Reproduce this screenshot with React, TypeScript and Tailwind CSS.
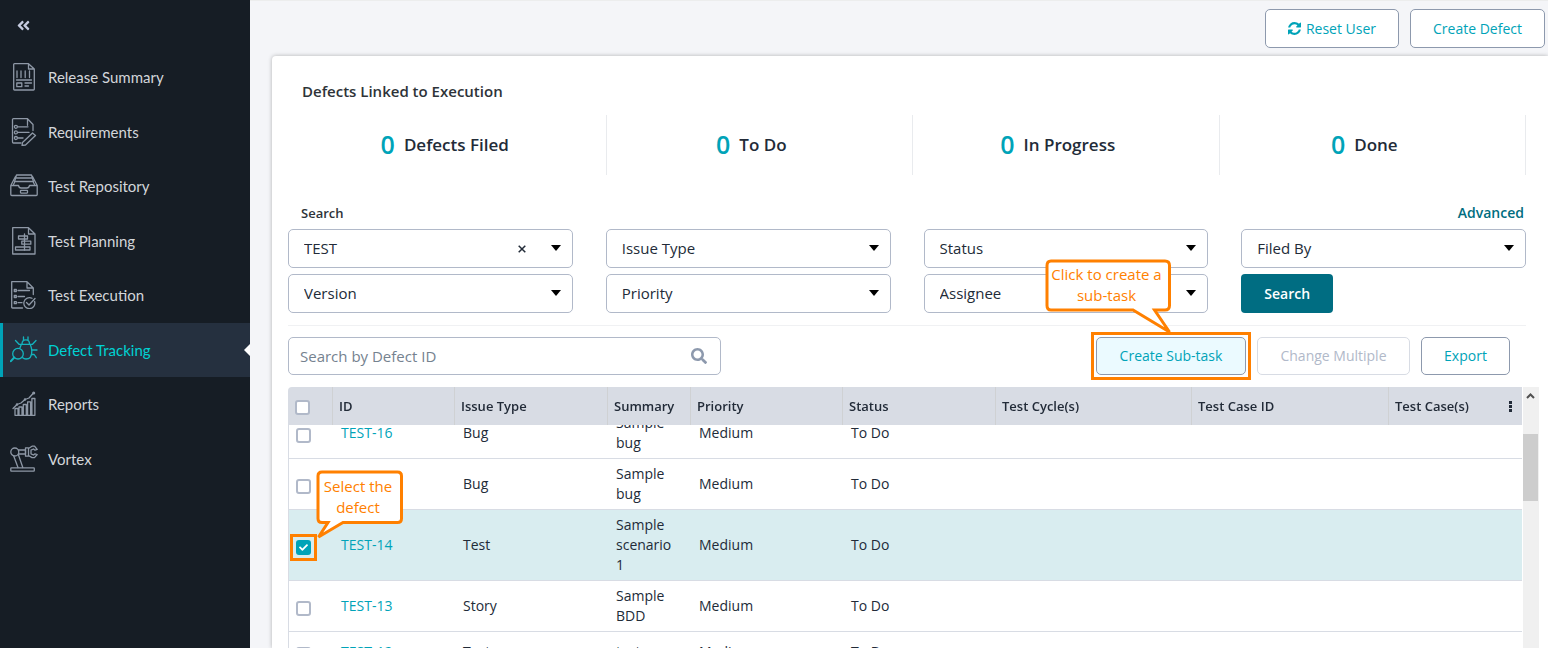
import { useEffect, useRef, useState } from "react";
import type { ReactNode } from "react";
import { FaSearch, FaAngleDoubleLeft, FaCheck } from "react-icons/fa";

function NavIcon({ children }: { children: ReactNode }) {
  return (
    <svg
      viewBox="0 0 28 28"
      className="size-7 shrink-0"
      fill="none"
      stroke="currentColor"
      strokeWidth="1.3"
      strokeLinejoin="round"
      strokeLinecap="round"
      aria-hidden="true"
    >
      {children}
    </svg>
  );
}

const navItems: { label: string; active?: boolean; icon: ReactNode }[] = [
  {
    label: "Release Summary",
    icon: (
      <>
        <path d="M4.5.7H18.5L24.3 6V26.3Q24.3 27 23.5 27H4.5Q3.7 27 3.7 26.3V1.5Q3.7.7 4.5.7ZM18.5.7V6H24.3" />
        <path d="M7 8v6.500M11 8v6.500M15.200 8v6.500M19.500 8v6.500M6.500 17H21.500M15 20H21.500M15 23H18.500" />
        <rect x="6.800" y="20" width="5" height="3.700" />
      </>
    ),
  },
  {
    label: "Requirements",
    icon: (
      <>
        <path d="M11 25H3.500Q2.500 25 2.500 24V1.500Q2.500.7 3.500.7H17.500L23 6.500V12.500M17.500.7V7.300" />
        <path d="M8 8.800H18M8 14.400H19M8 20H13" />
        <circle cx="5.900" cy="8.800" r="1.500" />
        <circle cx="5.900" cy="14.400" r="1.500" />
        <circle cx="5.900" cy="20" r="1.500" />
        <path d="M22.500 15L25.500 17.500L15.500 27L12 27.500L12.500 24.500Z" />
      </>
    ),
  },
  {
    label: "Test Repository",
    icon: (
      <>
        <path d="M.8 13.500V22.500Q.8 23.500 1.800 23.500H26.200Q27.200 23.500 27.200 22.500V13.500M.8 13.500H8.500Q9 16 11 16H17Q19 16 19.500 13.500H27.200M.8 13.500L5.500 4.500M27.200 13.500L22.500 4.500" />
        <path d="M6.500 3H21.500L22.500 6H5.500ZM4.500 9.500L5.500 6.500M23.500 9.500L22.500 6.500M5 9.500H23L24.500 12.500M5 9.500L3.500 12.500" />
        <rect x="10.500" y="18.300" width="7" height="2.800" rx=".5" />
      </>
    ),
  },
  {
    label: "Test Planning",
    icon: (
      <>
        <path d="M2.700.7H18.500L25 7V27H2.700ZM18.500.7V7H25" />
        <rect x="8.500" y="9" width="9" height="3" />
        <rect x="11.800" y="14.200" width="9" height="3" />
        <rect x="5.500" y="20" width="14.500" height="3" />
        <path d="M14.500 7V23" />
      </>
    ),
  },
  {
    label: "Test Execution",
    icon: (
      <>
        <path d="M12.500 27H2.500Q1.700 27 1.700 26.200V.7H17L23.300 7V13.500M17 .7V7H23.300" />
        <path d="M8 9.500H19.500M8 15.500H14.500M8 21.700H12" />
        <rect x="4.300" y="8.500" width="2" height="2" />
        <rect x="4.300" y="14.500" width="2" height="2" />
        <rect x="4.300" y="20.700" width="2" height="2" />
        <path d="M24.600 20.500A5.500 5.500 0 1 1 22 17.300M16.500 21.500L19 24L25 17.500" />
      </>
    ),
  },
  {
    label: "Defect Tracking",
    active: true,
    icon: (
      <>
        <circle cx="8" cy="17.700" r="5.300" />
        <path d="M4.200 21.500L.9 25.200" strokeWidth="2" />
        <path d="M12 8.200Q12 3.800 15.800 3.800T19.500 8.200M13.500 4.500V1M18 4.500V1M5.500 4.500L9 8.300H22.500L26 4.500" />
        <path d="M11.300 8.500L9.800 12.300M20.300 8.500Q21.800 12 21.800 15.500Q21.800 23 16 23Q14 23 12.700 21.700M21.800 14H27M21.300 18.500H24.200L26.300 21.700" />
      </>
    ),
  },
  {
    label: "Reports",
    icon: (
      <>
        <path d="M5 25.300V18.500H8V25.300M9 25.300V17H12V25.300M13.300 25.300V14.500H16.300V25.300M17.600 25.300V11.800H20.600V25.300M21.900 25.300V8.500H24.900V25.300M5 25.300H24.900" />
        <path d="M3 18.500L7 14.500L11 13L15 9.500L19 8L23.500 3" />
        <circle cx="23.700" cy="3" r=".9" />
        <circle cx="7" cy="14.500" r=".6" />
        <circle cx="15" cy="9.500" r=".6" />
      </>
    ),
  },
  {
    label: "Vortex",
    icon: (
      <>
        <circle cx="4.800" cy="7" r="4" />
        <path d="M8.500 5H15.500V9H8.500M3.700 11L8 22.500M8.500 10L12.800 22.500" />
        <rect x=".8" y="22.800" width="23.500" height="3.400" rx=".6" />
        <path d="M15.500 2.800H18.500V11.200H15.500ZM18.500 3.500L22 1.200H24.500L27.200 4.500L25 5.200L23.500 4L21 5.200V8.800L23.500 10L25 8.800L27.200 9.500L24.500 12.600H22L18.500 10.500" />
      </>
    ),
  },
];

const stats = ["Defects Filed", "To Do", "In Progress", "Done"];

const columns = [
  { label: "ID", width: "w-[122px]" },
  { label: "Issue Type", width: "w-[153px]" },
  { label: "Summary", width: "w-[83px]" },
  { label: "Priority", width: "w-[152px]" },
  { label: "Status", width: "w-[153px]" },
  { label: "Test Cycle(s)", width: "w-[196px]" },
  { label: "Test Case ID", width: "w-[197px]" },
  { label: "Test Case(s)", width: "w-[134px]" },
];

const defects = [
  { id: "TEST-16", type: "Bug", summary: "Sample bug" },
  { id: "TEST-15", type: "Bug", summary: "Sample bug" },
  { id: "TEST-14", type: "Test", summary: "Sample scenario 1" },
  { id: "TEST-13", type: "Story", summary: "Sample BDD" },
  { id: "TEST-12", type: "Test", summary: "test" },
];

function FilterSelect({ label, value }: { label: string; value?: string }) {
  const [current, setCurrent] = useState(value ?? "");
  return (
    <div className="relative">
      <select
        aria-label={label}
        value={current}
        onChange={(e) => setCurrent(e.target.value)}
        className="block h-[39px] w-full appearance-none rounded-[5px] border border-[#b1b9c9] bg-white pl-[15px] pr-10 text-[15px] text-[#222b38]"
      >
        <option value="">{label}</option>
        {value && <option value={value}>{value}</option>}
      </select>
      {current && (
        <button
          type="button"
          aria-label="Clear"
          onClick={() => setCurrent("")}
          className="absolute right-[43px] top-3 flex size-4 items-center justify-center"
        >
          <svg viewBox="0 0 8 8" className="size-2" stroke="#222b38" strokeWidth="1.500" aria-hidden="true">
            <path d="M.7.7L7.300 7.300M7.300.7L.7 7.300" />
          </svg>
        </button>
      )}
      <svg viewBox="0 0 10 6" className="pointer-events-none absolute right-3 top-4 h-1.5 w-2.5" aria-hidden="true">
        <path d="M0 0H10L5 6Z" fill="#000" />
      </svg>
    </div>
  );
}

function Check({ label, checked = false }: { label: string; checked?: boolean }) {
  const [on, setOn] = useState(checked);
  return (
    <span className="relative block size-[15px]">
      <input
        type="checkbox"
        aria-label={label}
        checked={on}
        onChange={() => setOn(!on)}
        className="block size-[15px] appearance-none rounded-[3px] border-2 border-[#b1b9c9] bg-white checked:border-[#00a3b8] checked:bg-[#00a3b8]"
      />
      {on && <FaCheck className="pointer-events-none absolute left-[3px] top-[3px] size-[9px] text-white" />}
    </span>
  );
}

const outlineButton =
  "rounded-[5px] border border-[#8d99ad] bg-white text-[14px] text-[#00a3b8]";

export default function App() {
  const scroller = useRef<HTMLDivElement>(null);

  useEffect(() => {
    if (scroller.current) scroller.current.scrollTop = 17;
  }, []);

  return (
    <div className="flex h-screen overflow-hidden bg-[#f4f5f8] font-['Open_Sans','Noto_Sans',sans-serif] text-[#222b38]">
      <aside className="w-[250px] shrink-0 bg-[#161d25] font-['Lato',sans-serif] text-[15px] text-[#d3d6da]">
        <button type="button" aria-label="Collapse menu" className="flex h-[50px] items-center pl-4 text-[#c5cbe0]">
          <FaAngleDoubleLeft className="size-[15px]" />
        </button>
        <nav className="grid h-[436px] auto-rows-fr">
          {navItems.map((item) => (
            <a
              key={item.label}
              href="#"
              className={
                item.active
                  ? "relative flex items-center gap-2.5 border-l-[3px] border-[#00a3b8] bg-[#25303f] pl-[7px] text-[#00d2d3]"
                  : "flex items-center gap-2.5 pl-2.5"
              }
            >
              <span className={item.active ? "text-[#14b3bd]" : "text-[#8e98a6]"}>
                <NavIcon>{item.icon}</NavIcon>
              </span>
              {item.label}
              {item.active && (
                <svg viewBox="0 0 6 12" className="absolute right-0 h-3 w-1.5" aria-hidden="true">
                  <path d="M6 0V12L0 6Z" fill="#fff" />
                </svg>
              )}
            </a>
          ))}
        </nav>
      </aside>

      <main className="flex min-w-0 flex-1 flex-col border-t border-[#eceded] pl-[22px]">
        <div className="flex justify-end gap-[11px] pb-2 pr-[3px] pt-2">
          <button type="button" className={`${outlineButton} flex h-[39px] w-[134px] items-center justify-center gap-[5px]`}>
            <svg viewBox="0 0 1536 1536" className="size-[13px]" fill="currentColor" aria-hidden="true">
              <path d="M1511 928q0 5-1 7-64 268-268 434.500T764 1536q-146 0-282.500-55T238 1324l-129 129q-19 19-45 19t-45-19-19-45V960q0-26 19-45t45-19h448q26 0 45 19t19 45-19 45l-137 137q71 66 161 102t187 36q134 0 250-65t186-179q11-17 53-117 8-23 30-23h192q13 0 22.500 9.500t9.500 22.500zm25-800v448q0 26-19 45t-45 19h-448q-26 0-45-19t-19-45 19-45l138-138Q969 256 768 256q-134 0-250 65T332 500q-11 17-53 117-8 23-30 23H50q-13 0-22.500-9.500T18 608v-7q65-268 270-434.500T768 0q146 0 284 55.500T1297 212l130-129q19-19 45-19t45 19 19 45z" />
            </svg>
            Reset User
          </button>
          <button type="button" className={`${outlineButton} h-[39px] w-[135px]`}>
            Create Defect
          </button>
        </div>

        <section className="flex min-h-0 flex-1 flex-col rounded-tl-[4px] bg-white pl-4 pr-[22px] shadow-[0_0_4px_rgba(0,0,0,0.28)]">
          <h1 className="pl-3.5 pt-[25px] text-[15px] font-semibold leading-5 text-[#2e3338]">
            Defects Linked to Execution
          </h1>

          <div className="ml-3 mt-3.5 grid grid-cols-4">
            {stats.map((label) => (
              <div key={label} className="flex h-[60px] items-center justify-center gap-[9px] border-r border-[#e9ebee] pr-4">
                <span className="pb-0.5 text-[25px] font-semibold leading-none text-[#00a3b8]">0</span>
                <span className="text-[17px] font-semibold">{label}</span>
              </div>
            ))}
          </div>

          <div className="mt-7 flex items-center justify-between pl-[13px] pr-0.5 leading-5">
            <h2 className="text-[13px] font-semibold text-[#2e3338]">Search</h2>
            <a href="#" className="text-[14px] font-semibold text-[#006d80]">Advanced</a>
          </div>

          <div className="mt-1.5 grid grid-cols-4 gap-x-[33px] gap-y-1.5">
            <FilterSelect label="Project" value="TEST" />
            <FilterSelect label="Issue Type" />
            <FilterSelect label="Status" />
            <FilterSelect label="Filed By" />
            <FilterSelect label="Version" />
            <FilterSelect label="Priority" />
            <FilterSelect label="Assignee" />
            <button type="button" className="h-[39px] w-[92px] rounded-[4px] bg-[#006d82] text-[14px] font-semibold text-white">
              Search
            </button>
          </div>

          <div className="mt-3 flex items-center border-t border-[#f0f1f3] pr-4 pt-[11px]">
            <div className="relative w-[433px]">
              <input
                type="text"
                aria-label="Search by Defect ID"
                placeholder="Search by Defect ID"
                className="block h-[38px] w-full rounded-[5px] border border-[#b1b9c9] pl-[11px] pr-10 text-[15px] placeholder:text-[#75828f]"
              />
              <FaSearch className="pointer-events-none absolute right-3.5 top-[11px] size-4 text-[#8d99ad]" />
            </div>
            <div className="ml-auto flex gap-[11px]">
              <div className="relative">
                <button type="button" className="h-[38px] w-[150px] rounded-[5px] border border-[#8d99ad] bg-[#ebfaff] pb-px text-[14px] text-[#00a3b8]">
                  Create Sub-task
                </button>
                <div className="pointer-events-none absolute -inset-[5px] border-[3px] border-[#ff8000]" />
                <div className="pointer-events-none absolute left-[-51px] top-[-78px] z-30 h-[75px] w-[127px]">
                  <svg viewBox="0 0 127 75" className="absolute inset-0" aria-hidden="true">
                    <path
                      d="M6 2H120Q124.500 2 124.500 6.500V46.500Q124.500 51 120 51H109.500L124.500 73L88 51H6Q2 51 2 46.500V6.500Q2 2 6 2Z"
                      fill="#fff"
                      stroke="#ff8000"
                      strokeWidth="3"
                    />
                  </svg>
                  <p className="relative pr-1 pt-[5px] text-center text-[15px] leading-[21px] text-[#ff8000]">
                    Click to create a<br />sub-task
                  </p>
                </div>
              </div>
              <button type="button" disabled className="h-[38px] w-[153px] rounded-[5px] border border-[#d8dce4] bg-white pb-px text-[14px] text-[#b1b9c9]">
                Change Multiple
              </button>
              <button type="button" className={`${outlineButton} h-[38px] w-[89px] pb-px`}>
                Export
              </button>
            </div>
          </div>

          <div className="-mr-[13px] mt-3 flex min-h-0 flex-1 gap-px">
            <div ref={scroller} className="min-w-0 flex-1 overflow-y-auto [scrollbar-width:none]">
              <table className="w-full table-fixed border-separate border-spacing-0 text-left text-[14px] leading-5">
                <thead className="sticky top-0 z-20">
                  <tr className="h-[38px] bg-[#d8dce4]">
                    <th className="w-[44px] rounded-tl-[4px] pl-[7px] pt-0.5">
                      <Check label="Select all defects" />
                    </th>
                    {columns.map((col, i) => (
                      <th key={col.label} className={`${col.width} border-l border-[#cfd1d3] pl-1.5 text-[13px] font-semibold`}>
                        <div className="flex items-center justify-between">
                          {col.label}
                          {i === columns.length - 1 && (
                            <button type="button" aria-label="Choose columns" className="mr-2.5">
                              <svg viewBox="0 0 3 11" className="h-[11px] w-[3px]" fill="#222b38" aria-hidden="true">
                                <path d="M0 0H3V3H0ZM0 4H3V7H0ZM0 8H3V11H0Z" />
                              </svg>
                            </button>
                          )}
                        </div>
                      </th>
                    ))}
                  </tr>
                </thead>
                <tbody className="[&_td]:border-b [&_td]:border-[#d8dce4] [&_td]:py-[5px] [&_td]:pl-[9px] [&_td]:pr-2.5">
                  {defects.map((d) => {
                    const selected = d.id === "TEST-14";
                    return (
                      <tr key={d.id} className={selected ? "h-[41px] bg-[#d9edf0]" : "h-[41px] bg-white"}>
                        <td className="border-l">
                          <div className="relative -ml-0.5 mt-1 size-[15px]">
                            <Check label={`Select ${d.id}`} checked={selected} />
                            {selected && (
                              <>
                                <div className="pointer-events-none absolute -inset-1.5 border-[3px] border-[#ff8000]" />
                                <div className="pointer-events-none absolute left-[20px] top-[-70px] z-10 h-[70px] w-[88px]">
                                  <svg viewBox="0 0 88 70" className="absolute inset-0" aria-hidden="true">
                                    <path
                                      d="M6 2H81.500Q85.500 2 85.500 6V48.500Q85.500 52.500 81.500 52.500H27L2.500 67L12 52.500H6Q2 52.500 2 48.500V6Q2 2 6 2Z"
                                      fill="#fff"
                                      stroke="#ff8000"
                                      strokeWidth="3"
                                    />
                                  </svg>
                                  <p className="relative pr-1 pt-1.5 text-center text-[15px] leading-[21px] text-[#ff8000]">
                                    Select the<br />defect
                                  </p>
                                </div>
                              </>
                            )}
                          </div>
                        </td>
                        <td>
                          <a href="#" className="text-[#00a3b8]">{d.id}</a>
                        </td>
                        <td>{d.type}</td>
                        <td>{d.summary}</td>
                        <td>Medium</td>
                        <td>To Do</td>
                        <td />
                        <td />
                        <td />
                      </tr>
                    );
                  })}
                </tbody>
              </table>
            </div>
            <div className="flex w-4 flex-col bg-[#f0f0f0]" aria-hidden="true">
              <svg viewBox="0 0 16 47" className="h-[47px] w-4" fill="none" stroke="#505050" strokeWidth="2">
                <path d="M4 11L7.500 7.500L11 11" />
              </svg>
              <div className="h-[67px] w-[15px] bg-[#cdcdcd]" />
            </div>
          </div>
        </section>
      </main>
    </div>
  );
}
